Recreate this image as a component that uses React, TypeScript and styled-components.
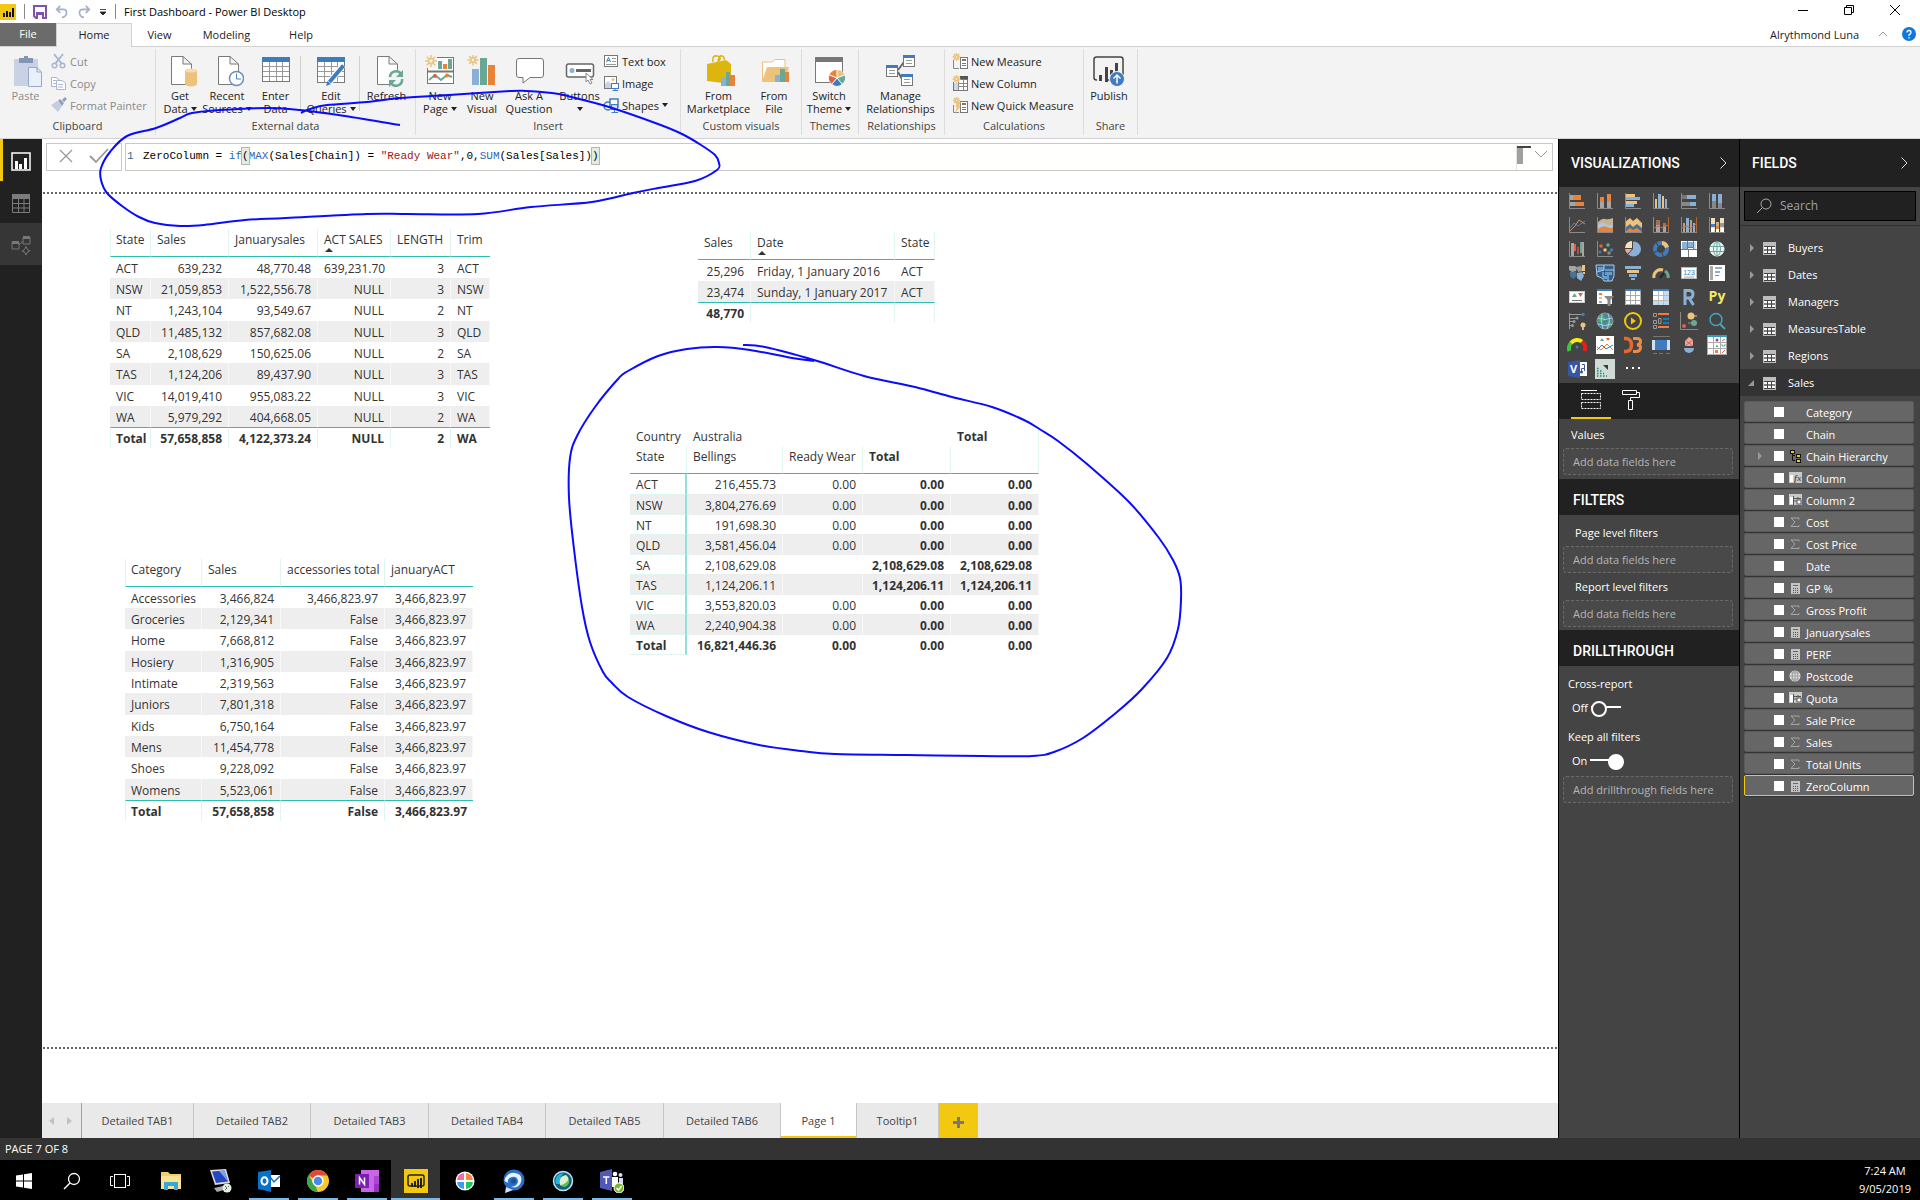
import React from "react";
import styled, { createGlobalStyle, css } from "styled-components";

const ui = `"Open Sans", "Noto Sans", sans-serif`;
const mono = `"Liberation Mono", monospace`;
const heading = `Roboto, "Open Sans", sans-serif`;

const Global = createGlobalStyle`
  * { box-sizing: border-box; }
  body { margin: 0; font: 11px/13px ${ui}; color: #333; background: #fff; }
  button { font: inherit; color: inherit; background: none; border: 0; padding: 0; margin: 0; }
  svg { display: block; flex: none; }
`;

const Shell = styled.div`
  position: relative;
  display: flex;
  flex-direction: column;
  min-height: 100vh;
  overflow: hidden;
`;

/* ---------- title bar ---------- */
const TitleBar = styled.header`
  display: flex;
  align-items: flex-start;
  height: 23px;
  color: #000;
`;
const QuickTools = styled.div`
  display: flex;
  align-items: center;
  height: 23px;
  gap: 8px;
`;
const QuickDivider = styled.span`
  width: 1px;
  height: 15px;
  background: #8a8a8a;
`;
const WindowTitle = styled.h1`
  margin: 0;
  font-size: 11px;
  line-height: 23px;
  font-weight: 400;
`;
const WindowButtons = styled.div`
  display: flex;
  margin-left: auto;
  padding-right: 2px;
  height: 20px;
`;
const WindowButton = styled.button`
  width: 46px;
  display: grid;
  place-items: center;
`;

/* ---------- menu ---------- */
const MenuBar = styled.nav`
  display: flex;
  height: 24px;
  border-bottom: 1px solid #d2d2d2;
  color: #222;
`;
const MenuTab = styled.button<{ $w: number; $kind?: "file" | "active" }>`
  width: ${(p) => p.$w}px;
  height: 24px;
  padding-bottom: 2px;
  ${(p) =>
    p.$kind === "file" &&
    css`
      height: 23px;
      background: #6b6b6b;
      color: #fff;
    `}
  ${(p) =>
    p.$kind === "active" &&
    css`
      background: #f3f3f3;
      border: 1px solid #d2d2d2;
      border-bottom: 0;
    `}
`;
const Account = styled.div`
  display: flex;
  align-items: center;
  gap: 19px;
  margin-left: auto;
  padding: 0 4px 1px 0;
`;
const AccountIcons = styled.div`
  display: flex;
  align-items: center;
  gap: 14px;
`;

/* ---------- ribbon ---------- */
const Ribbon = styled.section`
  display: flex;
  height: 92px;
  padding: 2px 0 3px;
  background: #f3f3f3;
  border-bottom: 1px solid #d2d2d2;
  color: #222;
`;
const Group = styled.div<{ $w: number }>`
  display: flex;
  flex-direction: column;
  width: ${(p) => p.$w}px;
  border-right: 1px solid #dcdcdc;
`;
const GroupTools = styled.div<{ $pad?: number }>`
  display: flex;
  height: 72px;
  padding-left: ${(p) => p.$pad ?? 1}px;
`;
const GroupLabel = styled.div`
  line-height: 18px;
  text-align: center;
  color: #444;
`;
const BigButton = styled.button<{ $w: number; $off?: boolean }>`
  display: flex;
  flex-direction: column;
  align-items: center;
  width: ${(p) => p.$w}px;
  padding-top: 6px;
  white-space: nowrap;
  color: ${(p) => (p.$off ? "#8a8a8a" : "#222")};
  svg {
    margin-bottom: 2px;
  }
`;
const LabelLine = styled.span`
  display: flex;
  align-items: center;
  justify-content: center;
  gap: 3px;
  min-height: 13px;
`;
const Caret = styled.i`
  border: 3px solid transparent;
  border-top: 4px solid #222;
  border-bottom: 0;
`;
const ToolDivider = styled.span`
  width: 1px;
  height: 55px;
  margin: 7px 2px 0 0;
  background: #d0d0d0;
`;
const SmallTools = styled.div<{ $off?: boolean }>`
  display: flex;
  flex-direction: column;
  padding-top: 1px;
  color: ${(p) => (p.$off ? "#8a8a8a" : "#222")};
`;
const SmallButton = styled.button`
  display: flex;
  align-items: center;
  gap: 3px;
  height: 22px;
  white-space: nowrap;
`;

/* ---------- workspace ---------- */
const Workspace = styled.div`
  display: flex;
  flex: 1;
`;
const SideNav = styled.nav`
  width: 42px;
  background: #212121;
`;
const NavButton = styled.button<{ $state?: "active" | "soft" }>`
  display: grid;
  place-items: center;
  width: 42px;
  height: 42px;
  padding: 3px 3px 0 0;
  border-left: 3px solid ${(p) => (p.$state === "active" ? "#f2c811" : "transparent")};
  background-color: ${(p) => (p.$state === "soft" ? "#363636" : "#212121")};
`;
const Main = styled.main`
  display: flex;
  flex-direction: column;
  flex: 1;
  min-width: 0;
  background: #fff;
`;
const FormulaRow = styled.div`
  display: flex;
  gap: 3px;
  padding: 4px 5px 0 4px;
`;
const FormulaActions = styled.div`
  display: flex;
  justify-content: center;
  gap: 16px;
  align-items: center;
  width: 76px;
  height: 28px;
  padding-bottom: 2px;
  border: 1px solid #c8c8c8;
`;
const FormulaBox = styled.div`
  display: flex;
  flex: 1;
  height: 28px;
  border: 1px solid #c8c8c8;
  background: #fffffe;
`;
const Code = styled.code`
  flex: 1;
  padding-left: 1px;
  font: 11px/24px ${mono};
  color: #000;
  white-space: pre;
`;
const LineNumber = styled.span`
  display: inline-block;
  width: 16px;
  color: #2b6b93;
`;
const Tok = styled.span<{ $c?: string }>`
  color: ${(p) => p.$c};
`;
const Bracket = styled.span`
  outline: 1px solid #b5b5b5;
  background: #e4ece0;
  padding: 2px 0;
`;
const MiniMap = styled.div`
  display: flex;
  gap: 4px;
  padding: 1px 5px 0 0;
  border-left: 1px solid #e4e4e4;
  margin-top: 1px;
`;
const Dots = styled.div`
  height: 2px;
  margin-left: 1px;
  background: repeating-linear-gradient(90deg, #666 0 2px, #fff 2px 4px);
`;
const Report = styled.section`
  display: flex;
  flex: 1;
  padding-left: 68px;
`;
const LeftColumn = styled.div`
  width: 520px;
  padding-top: 35px;
`;
const RightColumn = styled.div`
  padding-top: 38px;
`;
const Visual = styled.div<{ $top?: number; $left?: number }>`
  margin: ${(p) => p.$top ?? 0}px 0 0 ${(p) => p.$left ?? 0}px;
`;
const Gap = styled.div<{ $h: number }>`
  height: ${(p) => p.$h}px;
`;

const Grid = styled.table<{ $w: number }>`
  width: ${(p) => p.$w}px;
  table-layout: fixed;
  border-spacing: 0;
  font-size: 12px;
  line-height: 16px;
  color: #333;
  th, td {
    padding: 0 6px;
    font-weight: 400;
    text-align: left;
    white-space: nowrap;
    border-right: 1px solid #dff5f2;
  }
  tbody td { border-right-color: rgba(255, 255, 255, 0.6); }
  tbody tr > *, tfoot td { padding-top: 2px; }
  tbody tr:nth-child(even) > * { background: #eeeeee; }
`;
const PlainGrid = styled(Grid)<{ $edge?: boolean }>`
  thead th { height: 28px; padding-bottom: 6px; border-bottom: 1px solid #2bbfb1; }
  tbody tr { height: 21px; }
  tbody tr:nth-child(3n) { height: 22px; }
  tfoot td { height: 21px; font-weight: 700; border-top: 1px solid #2bbfb1; }
  ${(p) =>
    p.$edge &&
    css`
      thead th:first-child, tfoot td:first-child { border-left: 1px solid #dff5f2; padding-left: 5px; }
      thead th:last-child, tfoot td:last-child { border-right: 0; }
    `}
`;
const Cell = styled.td<{ $right?: boolean }>`
  && { text-align: ${(p) => (p.$right ? "right" : "left")}; }
`;
const HeadCell = styled.th`
  position: relative;
`;
const SortMark = styled.i`
  position: absolute;
  left: 7px;
  bottom: 4px;
  border: 4px solid transparent;
  border-bottom: 4px solid #333;
  border-top: 0;
`;
const Matrix = styled(Grid)`
  thead tr:first-child th { height: 20px; border-right: 0; }
  thead tr:first-child th:last-child { border-right: 1px solid #dff5f2; }
  thead tr:last-child th { height: 27px; padding-bottom: 6px; border-bottom: 1px solid #2bbfb1; }
  tbody tr { height: 20px; }
  tbody tr:first-child { height: 21px; }
  tbody tr > * { border-bottom: 1px solid #ececec; }
  tbody tr > th { border-right: 2px solid #8fe0d8; border-bottom-color: #dff5f2; }
  tbody tr:last-child > td { border-bottom: 0; }
  tbody tr:last-child > *, .sum { font-weight: 700; }
`;

/* ---------- page tabs, status ---------- */
const PageTabs = styled.nav`
  display: flex;
  height: 35px;
  margin-top: 54px;
  background: #e9e9e9;
  font-size: 11px;
  color: #444;
`;
const TabArrows = styled.div`
  display: flex;
  align-items: center;
  justify-content: space-around;
  width: 40px;
  padding-right: 2px;
  border-right: 1px solid #a0a0a0;
`;
const PageTab = styled.button<{ $w: number; $active?: boolean }>`
  width: ${(p) => p.$w}px;
  border-right: 1px solid #c6c6c6;
  ${(p) =>
    p.$active &&
    css`
      background: #fff;
      box-shadow: inset 0 -2px #f2c811;
    `}
`;
const AddPage = styled.button`
  display: grid;
  place-items: center;
  width: 39px;
  padding-top: 3px;
  background: #f2c811;
`;
const StatusBar = styled.footer`
  height: 22px;
  padding-left: 5px;
  background: #333;
  color: #fff;
  font-size: 11px;
  line-height: 22px;
`;

/* ---------- right panes ---------- */
const Pane = styled.aside`
  width: 181px;
  border-left: 1px solid #000;
  background: #444;
  color: #fff;
`;
const PaneHead = styled.header`
  display: flex;
  align-items: center;
  justify-content: space-between;
  height: 48px;
  padding: 0 11px 0 12px;
  background: #212121;
`;
const PaneTitle = styled.h2`
  margin: 0;
  font: 500 14px/20px ${heading};
`;
const IconGrid = styled.div`
  display: grid;
  grid-template-columns: repeat(6, 28px);
  grid-auto-rows: 24px;
  padding: 2px 4px;
`;
const IconButton = styled.button`
  display: grid;
  place-items: center;
`;
const FormatTabs = styled.div`
  display: flex;
  height: 36px;
  padding-left: 12px;
  background: #212121;
`;
const FormatTab = styled.button<{ $active?: boolean }>`
  display: grid;
  place-items: center;
  width: 40px;
  border-bottom: 2px solid ${(p) => (p.$active ? "#f2c811" : "transparent")};
`;
const SectionHead = styled.h3`
  margin: 0;
  height: 36px;
  padding: 5px 14px 0;
  background: #212121;
  font: 500 14px/32px ${heading};
`;
const PaneBody = styled.div<{ $tight?: boolean }>`
  display: flex;
  flex-direction: column;
  padding: ${(p) => (p.$tight ? "2px 6px 4px" : "4px 6px 3px")};
  font-size: 11px;
`;
const WellLabel = styled.div<{ $pad: number }>`
  padding-left: ${(p) => p.$pad}px;
  line-height: 27px;
`;
const Well = styled.div`
  height: 27px;
  margin: 0 0 0 -2px;
  padding-left: 9px;
  border: 1px dashed #6a6a6a;
  border-radius: 3px;
  background: #494949;
  color: #b5b5b5;
  line-height: 26px;
`;
const ToggleRow = styled.label`
  display: flex;
  align-items: center;
  gap: 3px;
  height: 20px;
  margin-bottom: 6px;
  padding-left: 7px;
`;
const Toggle = styled.input`
  appearance: none;
  width: 30px;
  height: 12px;
  margin: 0;
  background: linear-gradient(#fff, #fff) center / 100% 2px no-repeat;
  &::before {
    content: "";
    display: block;
    width: 12px;
    height: 12px;
    border: 2px solid #fff;
    border-radius: 50%;
    background: #444;
  }
  &:checked::before {
    margin-left: 18px;
    background: #fff;
  }
`;
const SearchBox = styled.label`
  display: flex;
  align-items: center;
  gap: 8px;
  height: 30px;
  margin: 4px;
  padding: 0 11px;
  border: 1px solid #000;
  background: #212121;
`;
const SearchInput = styled.input`
  flex: 1;
  min-width: 0;
  border: 0;
  padding: 0;
  background: none;
  font: 12px/20px ${ui};
  color: #fff;
  &::placeholder { color: #a0a0a0; opacity: 1; }
`;
const FieldTree = styled.div`
  padding-top: 8px;
  border-top: 1px solid #303030;
`;
const TableRow = styled.button<{ $open?: boolean }>`
  display: flex;
  align-items: center;
  width: 100%;
  height: 27px;
  padding-left: 8px;
  background: ${(p) => (p.$open ? "#333" : "none")};
  font-size: 11px;
  svg:nth-child(2) { margin: 2px 12px 0 7px; }
`;
const FieldList = styled.div`
  display: flex;
  flex-direction: column;
  gap: 1px;
  padding: 5px 6px 0 4px;
`;
const FieldRow = styled.label<{ $selected?: boolean }>`
  display: grid;
  grid-template-columns: 29px 10px 22px 1fr;
  align-items: center;
  height: 21px;
  border: 1px solid ${(p) => (p.$selected ? "#f2c811" : "#5a5a5a")};
  border-radius: 2px;
  background: #666;
  box-shadow: 0 1px #333;
  svg { justify-self: center; }
`;
const FieldName = styled.span`
  padding-top: 2px;
`;
const FieldCheck = styled.input`
  appearance: none;
  width: 10px;
  height: 10px;
  margin: 0;
  background: #fff;
  &:checked { background: #f2c811; }
`;

/* ---------- taskbar ---------- */
const TaskBar = styled.footer`
  display: flex;
  height: 40px;
  background: #000;
  color: #fff;
`;
const TaskButton = styled.button<{ $w?: number; $state?: "open" | "active" }>`
  display: grid;
  place-items: center;
  width: ${(p) => p.$w ?? 49}px;
  padding-top: 1px;
  ${(p) => p.$state === "open" && "background: linear-gradient(#76b9ed, #76b9ed) bottom / 40px 2px no-repeat;"}
  ${(p) => p.$state === "active" && "background: linear-gradient(#76b9ed, #76b9ed) bottom / 100% 2px no-repeat #333;"}
`;
const Clock = styled.time`
  margin-left: auto;
  padding: 2px 9px 0 0;
  line-height: 18px;
  text-align: center;
  white-space: pre;
`;
const InkLayer = styled.svg`
  position: absolute;
  top: 0;
  left: 0;
  pointer-events: none;
`;

/* ---------- drawing helpers ---------- */
const R = (p: { x: number; y: number; w: number; h: number; f: string }) => (
  <rect x={p.x} y={p.y} width={p.w} height={p.h} fill={p.f} />
);
const L = (p: { d: string; c?: string; w?: number; f?: string }) => (
  <path d={p.d} stroke={p.c ?? "#8a8a8a"} strokeWidth={p.w ?? 1} fill={p.f ?? "none"} />
);
const Axis = () => <L d="M2.5 2V17.5H18" />;
const Svg = ({ s = 20, h, size, children }: { s?: number; h?: number; size?: number; children: React.ReactNode }) => (
  <svg width={size ?? s} height={size ?? h ?? s} viewBox={`0 0 ${s} ${h ?? s}`} fill="none" aria-hidden="true">
    {children}
  </svg>
);

const O = "#e8833a", G = "#a6a6a6", Y = "#edc27c", B = "#8ab0d6", D = "#3e7cbf", T = "#68a894", P = "#f0a89c", RD = "#d9634c";

const vizIcons: [string, React.ReactNode][] = [
  ["Stacked bar chart", <><Axis /><R x={3} y={4} w={3} h={5} f={G} /><R x={6} y={4} w={8} h={5} f={O} /><R x={3} y={11} w={5} h={4} f={G} /><R x={8} y={11} w={9} h={4} f={O} /></>],
  ["Stacked column chart", <><Axis /><R x={5} y={6} w={4} h={5} f={O} /><R x={5} y={11} w={4} h={6} f={G} /><R x={12} y={3} w={4} h={8} f={O} /><R x={12} y={11} w={4} h={6} f={G} /></>],
  ["Clustered bar chart", <><Axis /><R x={3} y={3} w={9} h={3} f={Y} /><R x={3} y={6} w={14} h={3} f={B} /><R x={3} y={10} w={11} h={3} f={Y} /><R x={3} y={13} w={8} h={3} f={B} /></>],
  ["Clustered column chart", <><Axis /><R x={4} y={8} w={2} h={9} f={Y} /><R x={7} y={3} w={3} h={14} f={B} /><R x={11} y={5} w={2} h={12} f={Y} /><R x={14} y={8} w={2} h={9} f={B} /></>],
  ["100% stacked bar chart", <><Axis /><R x={3} y={4} w={5} h={4} f="#777" /><R x={8} y={4} w={9} h={4} f={B} /><R x={3} y={11} w={8} h={4} f="#888" /><R x={11} y={11} w={6} h={4} f={B} /></>],
  ["100% stacked column chart", <><Axis /><R x={5} y={3} w={4} h={7} f={B} /><R x={5} y={10} w={4} h={7} f="#888" /><R x={11} y={3} w={4} h={9} f={B} /><R x={11} y={12} w={4} h={5} f="#888" /></>],
  ["Line chart", <><Axis /><L d="M3 13L7 8L11 11L18 6" c="#4f81b8" /><L d="M3 16L8 11L12 5L18 9" c="#c98f80" /></>],
  ["Area chart", <><Axis /><path d="M3 7Q7 3 10 4T18 3V17H3Z" fill="#c5b394" /><path d="M3 10Q7 6 11 9T18 9V17H3Z" fill="#a9c9e6" /><path d="M3 14Q8 10 12 12T18 12V17H3Z" fill={O} /></>],
  ["Stacked area chart", <><path d="M2 17V7L7 3L10 6L14 3L19 8V17Z" fill={Y} /><path d="M2 13L7 9L10 12L14 9L19 13V17H2Z" fill="#4a7193" /><path d="M2 17L7 13L10 15L14 13L19 17V18H2Z" fill={O} /><Axis /></>],
  ["Line and stacked column chart", <><Axis /><R x={5} y={5} w={4} h={5} f="#a07155" /><R x={5} y={10} w={4} h={7} f={G} /><R x={12} y={8} w={3} h={3} f="#a07155" /><R x={12} y={11} w={3} h={6} f={G} /><L d="M17.5 2V17" c="#b5652c" /><L d="M3 13L8 11L11 13L17 10" c={RD} /></>],
  ["Line and clustered column chart", <><Axis /><R x={4} y={8} w={2} h={9} f="#b8a37c" /><R x={7} y={3} w={3} h={14} f={B} /><R x={11} y={5} w={2} h={12} f="#b8a37c" /><R x={14} y={8} w={2} h={9} f={B} /><L d="M17.5 2V17" c="#b5652c" /><L d="M3 13L8 11L11 14L17 9" c={RD} /></>],
  ["Ribbon chart", <><Axis /><R x={4} y={3} w={4} h={14} f="#f3dfc0" /><R x={9} y={7} w={3} h={7} f="#c8b090" /><R x={13} y={3} w={4} h={14} f="#f3dfc0" /><R x={4} y={9} w={4} h={3} f="#4f81b8" /><R x={9} y={11} w={3} h={4} f={O} /><R x={13} y={8} w={4} h={4} f="#999" /><R x={4} y={13} w={3} h={4} f="#fff" /><R x={9} y={14} w={3} h={3} f="#fff" /><R x={14} y={13} w={3} h={4} f="#fff" /></>],
  ["Waterfall chart", <><Axis /><R x={4} y={4} w={3} h={13} f={G} /><R x={7} y={5} w={2} h={7} f={RD} /><R x={10} y={8} w={2} h={7} f="#c04c3c" /><R x={13} y={3} w={2} h={11} f={T} /><R x={15} y={3} w={2} h={14} f={G} /></>],
  ["Scatter chart", <><Axis /><circle cx="6" cy="7" r="1.800" fill={RD} /><circle cx="13" cy="6" r="1.800" fill={T} /><circle cx="10" cy="11" r="1.800" fill={Y} /><circle cx="5" cy="13" r="1.500" fill={D} /><circle cx="16.500" cy="11" r="1.800" fill={D} /><circle cx="14" cy="14" r="1.800" fill="#888" /></>],
  ["Pie chart", <><circle cx="10.500" cy="10" r="7.500" fill={B} /><path d="M9 9V2A7 7 0 0 0 2 9Z" fill="#f7e1bd" /><path d="M9 10H2A7 7 0 0 0 5 15Z" fill={P} /><L d="M9.500 1V10L4 16M9 9.500H2" c="#444" /></>],
  ["Donut chart", <><circle cx="10" cy="10" r="6" stroke={D} strokeWidth="4" strokeDasharray="7 1" /><path d="M11 2A8 8 0 0 1 18 8L14 9A4 4 0 0 0 11 6Z" fill={Y} /></>],
  ["Treemap", <><R x={2} y={2} w={16} h={16} f="#fff" /><R x={3} y={3} w={5} h={7} f={B} /><R x={9} y={3} w={5} h={5} f={B} /><R x={15} y={3} w={2} h={7} f="#c9dbed" /><L d="M8.500 2V10M2 10.500H18M9.500 11V18M14.500 2V10M9 8.500H14" c="#777" /></>],
  ["Map", <><circle cx="10" cy="10" r="7" fill="#e9f4f4" stroke="#fff" /><L d="M3 7.500H17M3 12.500H17M10 3V17" c="#68a8a0" /><ellipse cx="10" cy="10" rx="3.500" ry="7" stroke="#68a8a0" /></>],
  ["Filled map", <><path d="M2 3H8L10 5L9 8L5 9L2 7Z" fill={G} /><path d="M9 4L14 3L16 8L11 9Z" fill="#999" /><path d="M3 9L9 9L10 13L6 16L3 13Z" fill="#4a7193" /><path d="M10 10L15 9L17 13L14 18L10 15Z" fill={B} /><R x={15} y={2} w={3} h={6} f={Y} /><R x={16} y={9} w={2} h={2} f={Y} /></>],
  ["Shape map", <><path d="M1 2H19V13L17 18H9L7 15L2 13Z" fill="#335f8c" stroke="#a9cbe8" /><path d="M3 4H9V8H3ZM10 9H17V12H10ZM8 13H12V16H8Z" fill="#6a9cc9" /><L d="M9 2V7L2 9M10 7H19M8 9V14M13 12V18" c="#a9cbe8" /></>],
  ["Funnel", <><R x={2} y={3} w={16} h={3} f={B} /><R x={4} y={7} w={12} h={3} f={Y} /><R x={6} y={11} w={8} h={3} f={B} /><R x={8} y={15} w={4} h={2} f={B} /></>],
  ["Gauge", <><path d="M3 15A7 7 0 0 1 12 7" stroke={Y} strokeWidth="3" /><path d="M14 8A7 7 0 0 1 17 15" stroke={T} strokeWidth="3" /><L d="M9 15L13 10" c="#222" w={2} /></>],
  ["Card", <><rect x="2.500" y="4.500" width="15" height="11" fill="#fff" stroke="#bbb" /><text x="10" y="12" fontSize="7" fill={D} textAnchor="middle" fontFamily="Liberation Sans">123</text><L d="M5 14H15" c="#aaa" /></>],
  ["Multi-row card", <><R x={2} y={2} w={16} h={16} f="#fff" /><R x={3} y={3} w={3} h={14} f="#aaa" /><R x={8} y={4} w={7} h={2} f={B} /><R x={8} y={8} w={5} h={2} f={B} /><R x={8} y={12} w={4} h={1} f="#888" /></>],
  ["KPI", <><rect x="2.500" y="4.500" width="15" height="11" fill="#fff" stroke="#ccc" /><path d="M5 10L7.500 6L10 10Z" fill={T} /><path d="M11 6H16L13.500 10Z" fill={RD} /><L d="M5 13.500H15" c="#777" /></>],
  ["Slicer", <><R x={2} y={2} w={15} h={15} f="#fff" /><R x={2} y={2} w={15} h={2} f={D} /><R x={4} y={6} w={3} h={2} f={O} /><R x={4} y={10} w={3} h={2} f={Y} /><R x={4} y={14} w={3} h={2} f={B} /><path d="M9 9H19L15.500 13V19H12.500V13Z" fill="#888" /></>],
  ["Table", <><R x={2} y={2} w={16} h={16} f="#fff" /><R x={2} y={2} w={16} h={2} f={D} /><L d="M7.500 4V18M12.500 4V18M2 8.500H18M2 13.500H18M2.500 4V17.500H17.500V4" c="#aaa" /></>],
  ["Matrix", <><R x={2} y={2} w={16} h={16} f="#fff" /><R x={2} y={2} w={16} h={2} f={D} /><R x={13} y={4} w={5} h={14} f="#c5dcf0" /><R x={2} y={14} w={16} h={4} f="#c5dcf0" /><L d="M7.500 4V18M12.500 4V18M2 8.500H18M2 13.500H18" c="#bbb" /></>],
  ["R script visual", <L d="M6 18V3.500H10Q14 3.500 14 7Q14 11 10 11H6M10 11L14.500 18" c={B} w={3} />],
  ["Python visual", <text x="10" y="14" fontSize="14" fontWeight="700" fill="#f5e960" textAnchor="middle" fontFamily="Open Sans">Py</text>],
  ["Key influencers", <><L d="M2.500 2V18M3 3.500H15M3 7.500H10M3 10.500H7M3 14.500H6" c="#999" /><circle cx="16" cy="3.500" r="1.800" fill={D} /><circle cx="10" cy="7" r="1.500" fill="#999" /><circle cx="7" cy="10.500" r="1.500" fill="#999" /><circle cx="5.500" cy="14.500" r="1.500" fill="#999" /><circle cx="16" cy="14" r="2.500" fill={Y} /><R x={15} y={16} w={2} h={3} f="#bbb" /></>],
  ["ArcGIS map", <><circle cx="10" cy="10" r="8" fill="#557f9b" stroke="#999" /><path d="M4 5L9 4L11 8L7 12L3 10ZM12 11L16 9L15 15L11 16Z" fill="#44b06c" /><L d="M3 7Q10 10 17 7M3 13Q10 16 17 13M7 3Q5 10 8 18M13 3Q16 10 12 18" c="#9fd3e6" /></>],
  ["Play axis", <><circle cx="10" cy="10" r="8" stroke="#f2c811" strokeWidth="2" /><path d="M8 6.500L13 10L8 13.500Z" fill="#f2c811" /></>],
  ["Text filter", <><L d="M2.500 2.500H5.500V5.500H2.500ZM2.500 9.500H5.500V12.500H2.500ZM2.500 14.500H5.500V17.500H2.500ZM7.500 7.500H10V12.500H7.500Z" c="#999" /><R x={7} y={2} w={11} h={2} f="#f47b3c" /><R x={12} y={7} w={6} h={2} f="#0a7cc9" /><R x={12} y={11} w={6} h={2} f="#0a7cc9" /><R x={7} y={15} w={11} h={2} f="#f47b3c" /></>],
  ["Dot plot", <><L d="M1.500 1V18.500H19" /><circle cx="12" cy="5" r="3.500" fill={Y} /><L d="M9 5H18" c={Y} /><circle cx="15" cy="12" r="3" fill={T} /><L d="M9 12H15" c={T} /><circle cx="5" cy="15" r="2" fill={RD} /></>],
  ["Search visual", <><circle cx="9" cy="8.500" r="6" stroke="#3fa7bf" strokeWidth="1.500" /><L d="M13 13L18 18" c="#3fa7bf" w={2} /></>],
  ["Dial gauge", <><path d="M2.500 16A8 8 0 0 1 4 8" stroke="#3ec73a" strokeWidth="4" /><path d="M4 8A8 8 0 0 1 15 6.500" stroke="#f7ef10" strokeWidth="4" /><path d="M15 6.500A8 8 0 0 1 17.500 16" stroke="#e62018" strokeWidth="4" /><circle cx="10" cy="12" r="1.500" fill={D} /></>],
  ["Sparkline", <><R x={1} y={1} w={18} h={18} f="#fff" /><path d="M5 6L7 3L9 6Z" fill={T} /><path d="M11 3H15L13 6Z" fill={RD} /><L d="M2 15L7 10L11 14L18 10" c={D} /><L d="M2 12L6 15L12 9L18 15" c={O} /></>],
  ["D3 visual", <><path d="M1 3.500H3Q8.500 4 8.500 10T3 16.500H1" stroke="#e8682c" strokeWidth="3.500" /><path d="M10 3.500H14Q17.500 3.500 17.500 6.500T14 10Q18 10 17.500 13T14 16.500H10" stroke="#f08a4b" strokeWidth="3" /></>],
  ["Scroller", <><R x={1} y={5} w={18} h={10} f="#cfe0ef" /><R x={4} y={5} w={12} h={10} f={D} /><L d="M2 1.500H19M2 18.500H6M8 18.500H12M15 18.500H19" c="#777" /></>],
  ["Person chart", <><path d="M6 6L10 2L14 5V11H6Z" fill={P} /><L d="M6 5L14 11M14 5L6 11" c={RD} /><path d="M5 13A5 5 0 0 0 15 13Z" fill={B} /></>],
  ["Icon grid", <><R x={0} y={0} w={20} h={20} f="#fff" /><R x={0} y={0} w={20} h={2} f="#2f9dbb" /><L d="M6.500 2V19M13.500 2V19M0 7.500H20M0 13.500H20M0.500 2V19.500H19.500V2" c="#aaa" /><circle cx="10" cy="5" r="1.500" fill="#8b4a9c" /><L d="M15 6L18 4M15 18L18 15" c={RD} /><path d="M8.500 12L10 9.500L11.500 12Z" fill={T} /><L d="M15 9V11H18V9" c={T} /><R x={8} y={15} w={3} h={3} f={O} /></>],
  ["Visio visual", <><R x={12} y={3} w={8} h={14} f="#fff" /><path d="M1 3L13 1V19L1 17Z" fill="#3955a3" /><text x="6.500" y="14" fontSize="11" fontWeight="700" fill="#fff" textAnchor="middle" fontFamily="Open Sans">V</text><L d="M14.500 12V9.500H17.500V5.500H15M17.500 9V12" c="#3955a3" /><circle cx="14.500" cy="13" r="1.500" fill="#3955a3" /></>],
  ["Dot density", <><R x={0} y={0} w={20} h={20} f="#d0dcd3" /><path d="M8 6H13V11Z" fill="#2b3d4f" /><path d="M2 9.500H4M2 12H7M2 14.500H9M2 17H12" stroke="#168a8a" strokeWidth="1.500" strokeDasharray="1.500 1.500" /></>],
  ["More visuals", <><R x={3} y={8} w={2} h={2} f="#fff" /><R x={9} y={8} w={2} h={2} f="#fff" /><R x={15} y={8} w={2} h={2} f="#fff" /></>],
];

const Sun = ({ x = 6, y = 6, r = 6 }) => (
  <g stroke={Y} strokeWidth="1.5">
    <path d={`M${x} ${y - r}V${y + r}M${x - r} ${y}H${x + r}M${x - r * 0.7} ${y - r * 0.7}L${x + r * 0.7} ${y + r * 0.7}M${x + r * 0.7} ${y - r * 0.7}L${x - r * 0.7} ${y + r * 0.7}`} />
    <circle cx={x} cy={y} r={r * 0.4} fill="#f3f3f3" />
  </g>
);
const Sheet = () => <L d="M6.500 1.500H18L26.500 9V29.500H6.500ZM18 1.500V9H26.500" c="#7a7a7a" f="#fff" />;

const big = {
  paste: <Svg s={32}><R x={4} y={4} w={24} h={27} f="#c8d2e4" /><R x={9} y={3} w={14} h={5} f="#8494b3" /><R x={14} y={1} w={4} h={4} f="#8494b3" /><path d="M18.500 12.500H27L31.500 17V31.500H18.500ZM27 12.500V17H31.500" fill="#e9f0fb" stroke="#96a9cc" /></Svg>,
  getData: <Svg s={34} h={32}><g transform="translate(2)"><Sheet /><path d="M20 15V29A6 2.500 0 0 0 32 29V15Z" fill={Y} /><ellipse cx="26" cy="15.500" rx="6" ry="2" fill="#f7dcae" /></g></Svg>,
  recent: <Svg s={34} h={32}><g transform="translate(2)"><Sheet /><circle cx="24.500" cy="23.500" r="7" fill="#fff" stroke="#6a8fbd" strokeWidth="1.500" /><L d="M24.500 18.500V24H29" c="#4f81b8" w={1} /></g></Svg>,
  enter: <Svg s={32}><rect x="2.500" y="2.500" width="27" height="24" fill="#fff" stroke="#7a7a7a" /><R x={2} y={2} w={28} h={5} f={D} /><L d="M9.500 7V26M16.500 7V26M22.500 7V26M3 11.500H29M3 16.500H29M3 21.500H29" c="#999" /></Svg>,
  edit: <Svg s={32}><rect x="2.500" y="2.500" width="27" height="25" fill="#fff" stroke="#7a7a7a" /><R x={2} y={2} w={28} h={5} f={D} /><L d="M9.500 7V27M16.500 7V27M22.500 7V27M3 11.500H29M3 16.500H29M3 21.500H29" c="#999" /><L d="M28 10L14 28" c="#fff" w={6} /><L d="M28.500 10.500L14.500 27" c={D} w={4} /><path d="M11 31L12.500 26L16 29Z" fill={D} /></Svg>,
  refresh: <Svg s={34} h={32}><g transform="translate(1)"><Sheet /><circle cx="25" cy="23" r="8" fill="#f3f3f3" /><L d="M19 22A6 6 0 0 1 30 19M31 24A6 6 0 0 1 20 28" c={T} w={2.5} /><path d="M32 15V22H25ZM18 32V25H25Z" fill={T} /></g></Svg>,
  newPage: <Svg s={32}><rect x="3.500" y="2.500" width="26" height="26" fill="#fff" stroke="#777" /><L d="M3 16.500H30" c="#777" w={2} /><R x={14} y={6} w={4} h={8} f={T} /><R x={19} y={9} w={4} h={5} f={O} /><R x={24} y={4} w={4} h={10} f={T} /><L d="M5 25L11 20L17 25L23 20L28 22" c={T} w={2} /><circle cx="11" cy="21" r="2" fill={RD} /><circle cx="23" cy="20.500" r="2" fill={O} /><R x={0} y={0} w={13} h={13} f="#f3f3f3" /><Sun x={7} /></Svg>,
  newVisual: <Svg s={32}><R x={6} y={14} w={7} h={16} f={B} /><R x={14} y={3} w={7} h={27} f={T} /><R x={22} y={10} w={7} h={20} f={O} /><Sun x={7} y={5} r={5.500} /></Svg>,
  ask: <Svg s={32}><L d="M6 3.500H28Q30.500 3.500 30.500 6V20Q30.500 22.500 28 22.500H17L10 28V22.500H6Q3.500 22.500 3.500 20V6Q3.500 3.500 6 3.500Z" c="#777" f="#fff" /></Svg>,
  buttons: <Svg s={32}><rect x="2.500" y="9" width="27" height="13" rx="2" fill="#fff" stroke="#666" strokeWidth="1.500" /><circle cx="8" cy="15.500" r="2.500" fill={B} /><R x={12} y={14} w={15} h={3} f="#666" /><path d="M22 18V27L24 25L26 29L28 28L26 24.500H29Z" fill="#fff" stroke="#888" /></Svg>,
  market: <Svg s={34} h={32}><g transform="translate(2)"><path d="M3 9L22 5L27 9V29L3 26Z" fill="#ddb50f" /><L d="M9 7Q8 0 13 1T15 6M14 7Q15 0 18 1T20 5" c="#ddb50f" w={1.5} /><R x={17} y={22} w={5} h={9} f={B} /><R x={22} y={17} w={4} h={14} f={T} /><R x={26} y={20} w={5} h={11} f={O} /></g></Svg>,
  file: <Svg s={34} h={32}><g transform="translate(2)"><L d="M3.500 26V7H13L16 4.500H26V12" c={Y} f="#fff" /><path d="M3 27L8 12H30L26 27Z" fill={Y} /><R x={16} y={20} w={5} h={7} f={B} /><R x={21} y={14} w={5} h={13} f={T} /><R x={26} y={17} w={4} h={10} f={O} /></g></Svg>,
  theme: <Svg s={32}><rect x="2.500" y="2.500" width="27" height="25" fill="#fff" stroke="#777" /><R x={2} y={2} w={28} h={5} f="#777" /><circle cx="24" cy="23" r="8.500" fill="#f3f3f3" /><path d="M24 23V15A8 8 0 0 1 31.500 20Z" fill={Y} /><path d="M24 23L31.500 20A8 8 0 0 1 29 29Z" fill={T} /><path d="M24 23L29 29A8 8 0 0 1 19 29Z" fill={D} /><path d="M24 23L19 29A8 8 0 0 1 16.500 20Z" fill={RD} /><path d="M24 23L16.500 20A8 8 0 0 1 24 15Z" fill={O} /><L d="M24 23V15M24 23L31.500 20M24 23L29 29M24 23L19 29M24 23L16.500 20" c="#fff" /></Svg>,
  relations: <Svg s={32}><L d="M13 15L19 7M13 17L17 24" c="#666" w={2} />{[[1, 10], [18, 0], [16, 19]].map(([x, y]) => <g key={x}><rect x={x + 0.500} y={y + 0.500} width="11" height="11" fill="#fff" stroke="#777" /><R x={x} y={y} w={12} h={3} f={D} /><L d={`M${x + 3} ${y + 5.500}H${x + 9}M${x + 3} ${y + 8.500}H${x + 9}`} c="#999" /></g>)}</Svg>,
  publish: <Svg s={32}><rect x="1" y="2" width="29" height="23" rx="2.500" stroke="#444" strokeWidth="1.500" /><R x={4} y={18} w={8} h={9} f="#f3f3f3" /><R x={6} y={20} w={3} h={6} f="#444" /><R x={12} y={12} w={3} h={15} f="#444" /><R x={17} y={15} w={3} h={10} f="#444" /><R x={22} y={8} w={3} h={12} f="#444" /><circle cx="24" cy="24" r="7.500" fill={D} stroke="#f3f3f3" /><L d="M24 28.500V20M20.500 23.500L24 20L27.500 23.500" c="#fff" w={1.5} /></Svg>,
};

const sm = {
  cut: <Svg s={16}><L d="M3 1L11 11M12 1L4 11" c="#a9b6cf" w={2} /><circle cx="3.500" cy="12.500" r="2.300" stroke="#a9b6cf" strokeWidth="1.500" /><circle cx="11.500" cy="12.500" r="2.300" stroke="#a9b6cf" strokeWidth="1.500" /></Svg>,
  copy: <Svg s={16}><L d="M0.500 2.500H5L8.500 5V11.500H0.500Z" c="#a9b6cf" f="#fff" /><L d="M5.500 5.500H11L14.500 8V14.500H5.500Z" c="#a9b6cf" f="#fff" /><L d="M7 9.500H12M7 12H12M2 5.500H5M2 8.500H5" c="#a9b6cf" /></Svg>,
  painter: <Svg s={16}><path d="M0 8L6 4L11 9L7 15Z" fill="#c2cde0" /><path d="M7 4L9 2L13 6L11 9Z" fill="#8f9fbd" /><L d="M12 4L15 1" c="#8f9fbd" w={3} /></Svg>,
  text: <Svg s={16}><rect x="1.500" y="2.500" width="13" height="11" fill="#fff" stroke="#777" /><L d="M3.500 9L5.500 4.500L7.500 9M4 7.500H7" c={D} /><L d="M9 5.500H13M9 8.500H13M3 11.500H13" c="#999" /></Svg>,
  image: <Svg s={16}><rect x="1.500" y="1.500" width="12" height="12" fill="#fff" stroke="#777" /><circle cx="10" cy="4.500" r="1.500" fill={Y} /><path d="M2 13V9L5 6L8 9V13Z" fill="#c5d3e6" /><rect x="8.500" y="8.500" width="7" height="5" fill="#fff" stroke={D} /><L d="M12 14V15.500M9.500 15.500H15" c={D} /></Svg>,
  shapes: <Svg s={16}><circle cx="5" cy="9" r="4" stroke={D} strokeWidth="1.500" /><rect x="7" y="2" width="8" height="8" fill="#fff" stroke={D} strokeWidth="1.500" /><rect x="8.500" y="7.500" width="6" height="5" fill="#c5dcf0" stroke={D} /><L d="M11.500 13V15.500M8.500 15.500H15" c={D} /></Svg>,
  measure: <Svg s={16}><L d="M1.500 7V15.500H7" c="#888" /><rect x="8.500" y="4.500" width="7" height="11" fill="#fff" stroke="#777" /><R x={10} y={6} w={4} h={2} f="#777" /><L d="M10 10.500H14M10 12.500H14" c="#777" /><Sun x={4.500} y={4} r={4} /></Svg>,
  column: <Svg s={16}><rect x="1.500" y="4.500" width="14" height="11" fill="#fff" stroke="#777" /><R x={8} y={1} w={8} h={3} f="#555" /><R x={2} y={8} w={4} h={7} f="#c5dcf0" /><L d="M6.500 4V15M11.500 4V15M6 8.500H15M6 11.500H15" c="#888" /><R x={0} y={0} w={8} h={7} f="#f3f3f3" /><Sun x={4.500} y={4} r={4} /></Svg>,
  quick: <Svg s={16}><L d="M1.500 8V15.500H7" c="#888" /><rect x="8.500" y="4.500" width="7" height="11" fill="#fff" stroke="#777" /><R x={10} y={6} w={4} h={2} f="#777" /><L d="M10 10.500H14M10 12.500H14" c="#777" /><path d="M6 5L9 5L7 9H9L3 16L5 10H3Z" fill={Y} /><Sun x={4.500} y={3.500} r={3.500} /></Svg>,
};

const TableGlyph = () => (
  <Svg s={13} h={13}><R x={0} y={0} w={13} h={13} f="#bdbdbd" /><L d="M1 4.500H12M1 8H12M1 11.500H12M4.500 4V12M8.500 4V12" c="#444" w={1} /><R x={1} y={5} w={3} h={2} f="#fff" /><R x={5} y={5} w={3} h={2} f="#fff" /><R x={9} y={5} w={3} h={2} f="#fff" /><R x={1} y={9} w={3} h={2} f="#fff" /><R x={5} y={9} w={3} h={2} f="#fff" /><R x={9} y={9} w={3} h={2} f="#fff" /></Svg>
);
const fieldIcons: Record<string, React.ReactNode> = {
  none: <span />,
  sum: <Svg s={12}><path d="M10 3.500V2H2L6 6L2 10.500H10V9" stroke="#a5a5a5" /></Svg>,
  calc: <Svg s={12}><R x={2} y={1} w={9} h={11} f="#c4c4c4" /><L d="M4 3.500H9" c="#666" /><path d="M4 6.500H10M4 8.500H10M4 10.500H10" stroke="#555" strokeDasharray="1 1" /></Svg>,
  hier: <Svg s={12} h={14}><L d="M3.500 4V11.500H6M3.500 6.500H6" c="#111" /><rect x="1.500" y="1.500" width="4" height="3" fill="#f2c811" stroke="#111" /><rect x="7.500" y="5.500" width="4" height="3" fill="#f2c811" stroke="#111" /><rect x="7.500" y="10.500" width="4" height="3" fill="#f2c811" stroke="#111" /></Svg>,
  fx: <Svg s={13}><R x={0} y={1} w={13} h={11} f="#c9c9c9" /><R x={1} y={4} w={3} h={7} f="#fff" /><text x="5" y="10" fontSize="9" fontStyle="italic" fontWeight="700" fill="#555" fontFamily="Liberation Serif">fx</text></Svg>,
  col: <Svg s={13}><R x={0} y={1} w={13} h={11} f="#c9c9c9" /><R x={1} y={4} w={3} h={7} f="#fff" /><L d="M4.500 3V12M9 4V6M5 5.500H12M5 8H8" c="#555" /><rect x="8" y="7" width="4" height="4" fill="#fff" stroke="#555" /></Svg>,
  globe: <Svg s={12}><circle cx="6" cy="6" r="5.500" fill="#dedede" /><L d="M6 0V12M0.500 6H11.500M2 3H10M2 9H10" c="#8a8a8a" w={0.700} /><ellipse cx="6" cy="6" rx="2.800" ry="5.500" stroke="#8a8a8a" strokeWidth="0.700" /></Svg>,
};

/* ---------- data ---------- */
type Col = { label: string; w: number; right?: boolean; sort?: boolean };
const stateCols: Col[] = [
  { label: "State", w: 41 },
  { label: "Sales", w: 78, right: true },
  { label: "Januarysales", w: 89, right: true },
  { label: "ACT SALES", w: 73, right: true, sort: true },
  { label: "LENGTH", w: 60, right: true },
  { label: "Trim", w: 39 },
];
const stateRows = `ACT|639,232|48,770.48|639,231.70|3|ACT
NSW|21,059,853|1,522,556.78|NULL|3|NSW
NT|1,243,104|93,549.67|NULL|2|NT
QLD|11,485,132|857,682.08|NULL|3|QLD
SA|2,108,629|150,625.06|NULL|2|SA
TAS|1,124,206|89,437.90|NULL|3|TAS
VIC|14,019,410|955,083.22|NULL|3|VIC
WA|5,979,292|404,668.05|NULL|2|WA`.split("\n").map((r) => r.split("|"));
const dateCols: Col[] = [
  { label: "Sales", w: 53, right: true },
  { label: "Date", w: 144, sort: true },
  { label: "State", w: 40 },
];
const dateRows = [["25,296", "Friday, 1 January 2016", "ACT"], ["23,474", "Sunday, 1 January 2017", "ACT"]];
const catCols: Col[] = [
  { label: "Category", w: 77 },
  { label: "Sales", w: 79, right: true },
  { label: "accessories total", w: 104, right: true },
  { label: "januaryACT", w: 88, right: true },
];
const catRows = `Accessories|3,466,824|3,466,823.97
Groceries|2,129,341|False
Home|7,668,812|False
Hosiery|1,316,905|False
Intimate|2,319,563|False
Juniors|7,801,318|False
Kids|6,750,164|False
Mens|11,454,778|False
Shoes|9,228,092|False
Womens|5,523,061|False`.split("\n").map((r) => [...r.split("|"), "3,466,823.97"]);
const matrixRows = `ACT|216,455.73|0.00|0.00|0.00
NSW|3,804,276.69|0.00|0.00|0.00
NT|191,698.30|0.00|0.00|0.00
QLD|3,581,456.04|0.00|0.00|0.00
SA|2,108,629.08||2,108,629.08|2,108,629.08
TAS|1,124,206.11||1,124,206.11|1,124,206.11
VIC|3,553,820.03|0.00|0.00|0.00
WA|2,240,904.38|0.00|0.00|0.00
Total|16,821,446.36|0.00|0.00|0.00`.split("\n").map((r) => r.split("|"));

const fields: [string, string][] = [
  ["Category", "none"], ["Chain", "none"], ["Chain Hierarchy", "hier"], ["Column", "fx"], ["Column 2", "col"],
  ["Cost", "sum"], ["Cost Price", "sum"], ["Date", "none"], ["GP %", "calc"], ["Gross Profit", "sum"],
  ["Januarysales", "calc"], ["PERF", "calc"], ["Postcode", "globe"], ["Quota", "col"], ["Sale Price", "sum"],
  ["Sales", "sum"], ["Total Units", "sum"], ["ZeroColumn", "calc"],
];

const pageTabs: [string, number][] = [
  ["Detailed TAB1", 112], ["Detailed TAB2", 117], ["Detailed TAB3", 118], ["Detailed TAB4", 117],
  ["Detailed TAB5", 118], ["Detailed TAB6", 117], ["Page 1", 76], ["Tooltip1", 82],
];

const DataTable = ({ cols, rows, total, edge }: { cols: Col[]; rows: string[][]; total: string[]; edge?: boolean }) => (
  <PlainGrid $w={cols.reduce((a, c) => a + c.w, 0)} $edge={edge}>
    <colgroup>{cols.map((c) => <col key={c.label} style={{ width: c.w }} />)}</colgroup>
    <thead>
      <tr>{cols.map((c) => <HeadCell key={c.label} scope="col">{c.label}{c.sort && <SortMark />}</HeadCell>)}</tr>
    </thead>
    <tbody>
      {rows.map((r) => <tr key={r[0]}>{r.map((v, i) => <Cell key={i} $right={cols[i].right}>{v}</Cell>)}</tr>)}
    </tbody>
    <tfoot>
      <tr>{total.map((v, i) => <Cell key={i} $right={cols[i].right}>{v}</Cell>)}</tr>
    </tfoot>
  </PlainGrid>
);

const Tool = ({ w, icon, lines, caret, off }: { w: number; icon: React.ReactNode; lines: string[]; caret?: boolean; off?: boolean }) => (
  <BigButton $w={w} $off={off}>
    {icon}
    {lines.map((t, i) => <LabelLine key={i}>{t}{caret && i === lines.length - 1 && <Caret />}</LabelLine>)}
  </BigButton>
);

/* smooth line through hand-drawn points */
const stroke = (pts: number[][]) =>
  pts.reduce((d, p, i) => {
    if (i === 0) return `M${p[0]} ${p[1]}`;
    const a = pts[i - 2] ?? pts[i - 1], b = pts[i - 1], n = pts[i + 1] ?? p;
    return `${d}C${b[0] + (p[0] - a[0]) / 6} ${b[1] + (p[1] - a[1]) / 6} ${p[0] - (n[0] - b[0]) / 6} ${p[1] - (n[1] - b[1]) / 6} ${p[0]} ${p[1]}`;
  }, "");
const inkFormula = [[400, 125], [345, 116], [300, 110], [269, 108], [220, 110], [192, 113], [180, 118], [156, 128], [127, 136], [110, 152], [101, 168], [101, 180], [107, 193], [122, 206], [139, 217], [155, 223], [180, 226], [204, 225], [245, 220], [286, 218], [367, 214], [408, 214], [478, 214], [531, 207], [592, 202], [633, 193], [658, 188], [695, 181], [717, 170], [719, 163], [715, 155], [701, 145], [682, 134], [658, 124], [609, 107], [571, 97], [559, 94], [527, 91], [510, 91], [449, 95], [400, 98], [367, 102], [327, 105], [310, 109], [301, 113]];
const inkMatrix = [[743, 345], [765, 347], [814, 360], [864, 376], [915, 387], [952, 397], [992, 407], [1024, 420], [1041, 430], [1058, 441], [1087, 464], [1129, 502], [1159, 538], [1173, 560], [1180, 578], [1181, 600], [1178, 629], [1167, 658], [1142, 689], [1117, 712], [1083, 738], [1054, 752], [1032, 756], [982, 756], [906, 755], [835, 754], [801, 751], [759, 745], [708, 732], [666, 716], [628, 697], [612, 683], [603, 672], [590, 642], [582, 607], [574, 549], [569, 498], [570, 458], [577, 436], [595, 407], [618, 379], [628, 371], [658, 356], [687, 349], [717, 347], [750, 350], [792, 358], [814, 361]];

const Chevron = () => <Svg s={9} h={12}><L d="M1.500 0.500L7 6L1.500 11.500" c="#ddd" /></Svg>;

const taskIcons: { name: string; icon: React.ReactNode; w?: number; state?: "open" | "active" }[] = [
  { name: "Start", w: 48, icon: <Svg s={16}><path d="M0 2.500L7 1.500V7.500H0ZM8 1.300L16 0V7.500H8ZM0 8.500H7V14.500L0 13.500ZM8 8.500H16V16L8 14.700Z" fill="#fff" /></Svg> },
  { name: "Search", w: 48, icon: <Svg s={18}><circle cx="11" cy="7" r="5.500" stroke="#fff" strokeWidth="1.300" /><L d="M7 11L1 17" c="#fff" w={1.5} /></Svg> },
  { name: "Task view", w: 48, icon: <Svg s={20} h={16}><rect x="4.500" y="1.500" width="11" height="13" stroke="#fff" /><L d="M3 3.500H0.500V12.500H3M17 3.500H19.500V12.500H17" c="#fff" /></Svg> },
  { name: "File Explorer", w: 54, icon: <Svg s={22} h={18}><path d="M1 0H8L10 2H21V17H1Z" fill="#f5cf6a" /><R x={1} y={4} w={20} h={13} f="#ffe394" /><path d="M4 18V10H18V18H14V14H8V18Z" fill="#34a9dd" /></Svg> },
  { name: "Remote Desktop", w: 46, icon: <Svg s={24}><path d="M1 1L17 0L21 14L6 16Z" fill="#ddd" /><path d="M3 2.500L15.500 1.500L19 12.500L7 14Z" fill="#2546c4" /><path d="M10 2L15.500 1.500L19 12.500Z" fill="#7aa0ee" /><path d="M5 19L14 17L18 20L8 23Z" fill="#aaa" /><circle cx="18" cy="19" r="4.500" fill="#e8ebe6" /><L d="M16 17L18 19L16 21M20 17L19 18" c="#2f8f3b" /></Svg> },
  { name: "Outlook", state: "open", icon: <Svg s={24}><R x={12} y={6} w={11} h={12} f="#fff" /><L d="M13 8L17 13L23 7" c="#0a72c6" w={1.500} /><path d="M1 3L14 1V23L1 20Z" fill="#0a72c6" /><ellipse cx="7.500" cy="12" rx="3" ry="3.700" stroke="#fff" strokeWidth="2" /></Svg> },
  { name: "Chrome", state: "open", icon: <Svg s={24}><circle cx="12" cy="12" r="11" fill="#f7c927" /><path d="M12 12L2.500 6.500A11 11 0 0 1 21.500 6.500H12Z" fill="#dd4b3e" /><path d="M2.500 6.500L9 16L12 23A11 11 0 0 1 2.500 6.500Z" fill="#3da453" /><circle cx="12" cy="12" r="5" fill="#4a87ee" stroke="#fff" strokeWidth="1.500" /></Svg> },
  { name: "OneNote", state: "open", icon: <Svg s={24}><R x={6} y={1} w={18} h={22} f="#c966e8" /><R x={19} y={7} w={5} h={8} f="#ad45d2" /><R x={19} y={15} w={5} h={8} f="#9b30c4" /><R x={0} y={5} w={14} h={14} f="#7c1fb0" /><L d="M4.500 15.500V8.500L9.500 15.500V8.500" c="#fff" w={1.5} /></Svg> },
  { name: "Power BI Desktop", state: "active", icon: <Svg s={24}><R x={0} y={0} w={24} h={24} f="#f2c811" /><rect x="4" y="6" width="16" height="11" rx="2" stroke="#222" strokeWidth="1.500" /><R x={7} y={14} w={2} h={4} f="#222" /><R x={10} y={12} w={2} h={6} f="#222" /><R x={13} y={10} w={2} h={9} f="#222" /><R x={16} y={9} w={2} h={10} f="#222" /></Svg> },
  { name: "Photos", icon: <Svg s={20}><circle cx="10" cy="10" r="9.500" fill="#fff" /><path d="M9 9H2A8 8 0 0 1 9 2Z" fill="#f26bb0" /><path d="M11 9V2A8 8 0 0 1 18 9Z" fill="#f5893c" /><path d="M9 11V18A8 8 0 0 1 2 11Z" fill="#3d9bf0" /><path d="M11 11H18A8 8 0 0 1 11 18Z" fill="#25c268" /></Svg> },
  { name: "Messenger", state: "open", icon: <Svg s={24}><circle cx="12" cy="11" r="10.500" fill="#2a6fc4" /><path d="M4 18L3 24L11 21Z" fill="#cfe3f7" /><path d="M2.500 12A9 9 0 0 1 13 4Q21 5 19 13Q17 20 9 18Q16 17 16 12Q15 7 10 8T6 14Z" fill="#e8f2fc" /><circle cx="11.500" cy="12" r="2.500" fill="#1c4f9c" /></Svg> },
  { name: "Webex", state: "open", icon: <Svg s={22}><circle cx="11" cy="11" r="9.500" fill="#0f5f7d" stroke="#bfe4ee" strokeWidth="1.500" /><path d="M4 14A8 8 0 0 1 12 3Q7 7 8 14Z" fill="#1fb5dd" /><path d="M8 15Q6 6 14 5Q18 8 16 13Q13 18 8 15Z" fill="#dff0cf" /><path d="M8 15Q13 15 17 9Q18 15 13 17Q10 17 8 15Z" fill="#61bf4b" /></Svg> },
  { name: "Teams", state: "open", icon: <Svg s={24}><R x={12} y={8} w={6} h={10} f="#fff" /><R x={19} y={9} w={4} h={7} f="#d9dbf2" /><circle cx="15" cy="5" r="2.300" fill="#fff" /><circle cx="20.500" cy="6" r="2" fill="#d9dbf2" /><path d="M0 3L12 0V22L0 19Z" fill="#5059b5" /><L d="M3 8H9.500M6.300 8V15" c="#fff" w={1.500} /><circle cx="19" cy="19" r="5" fill="#76b82a" stroke="#fff" /><L d="M16.500 19L18.500 21L21.500 17" c="#fff" w={1.5} /></Svg> },
];

export default function App() {
  return (
    <Shell>
      <Global />
      <TitleBar>
        <QuickTools>
          <Svg s={16}><R x={0} y={0} w={16} h={16} f="#f2c811" /><R x={3} y={9} w={2} h={4} f="#111" /><R x={6} y={7} w={2} h={6} f="#111" /><R x={9} y={8} w={2} h={5} f="#111" /><R x={12} y={4} w={2} h={9} f="#111" /></Svg>
          <QuickDivider />
          <Svg s={14}><path d="M1 1H13V13H3L1 11Z" stroke="#8251a8" strokeWidth="2" /><R x={3} y={7} w={8} h={6} f="#8251a8" /><R x={5} y={10} w={4} h={4} f="#fff" /></Svg>
          <Svg s={16} size={14}><L d="M3 5H9Q14 5 13 10Q12 14 8 14M6 1L2 5L6 9" c="#a3b1cc" w={2} /></Svg>
          <Svg s={16} size={14}><L d="M13 5H7Q2 5 3 10Q4 14 8 14M10 1L14 5L10 9" c="#a3b1cc" w={2} /></Svg>
          <Svg s={8}><path d="M1 1.500H7M1 4H7L4 7Z" fill="#222" stroke="#222" strokeWidth=".8" /></Svg>
          <QuickDivider />
          <WindowTitle>First Dashboard - Power BI Desktop</WindowTitle>
        </QuickTools>
        <WindowButtons>
          <WindowButton aria-label="Minimize"><Svg s={10}><L d="M0 5.500H10" c="#000" /></Svg></WindowButton>
          <WindowButton aria-label="Restore"><Svg s={10}><L d="M0.500 2.500H7.500V9.500H0.500ZM2.500 2V0.500H9.500V7.500H8" c="#000" /></Svg></WindowButton>
          <WindowButton aria-label="Close"><Svg s={10}><L d="M0 0L10 10M10 0L0 10" c="#000" /></Svg></WindowButton>
        </WindowButtons>
      </TitleBar>
      <MenuBar>
        <MenuTab $w={56} $kind="file">File</MenuTab>
        <MenuTab $w={76} $kind="active">Home</MenuTab>
        <MenuTab $w={55}>View</MenuTab>
        <MenuTab $w={79}>Modeling</MenuTab>
        <MenuTab $w={70}>Help</MenuTab>
        <Account>
          Alrythmond Luna
          <AccountIcons>
            <Svg s={10} h={6}><L d="M1 5L5 1L9 5" c="#999" /></Svg>
            <Svg s={14}><circle cx="7" cy="7" r="7" fill="#1277d6" /><L d="M5 5.500Q5 3.500 7 3.500T9 5.500Q9 6.500 7 8V9M7 10V11.500" c="#fff" w={1.3} /></Svg>
          </AccountIcons>
        </Account>
      </MenuBar>

      <Ribbon>
        <Group $w={156}>
          <GroupTools $pad={0}>
            <Tool w={51} icon={big.paste} lines={["Paste"]} off />
            <SmallTools $off>
              <SmallButton>{sm.cut}Cut</SmallButton>
              <SmallButton>{sm.copy}Copy</SmallButton>
              <SmallButton>{sm.painter}Format Painter</SmallButton>
            </SmallTools>
          </GroupTools>
          <GroupLabel>Clipboard</GroupLabel>
        </Group>
        <Group $w={260}>
          <GroupTools>
            <Tool w={46} icon={big.getData} lines={["Get", "Data"]} caret />
            <Tool w={48} icon={big.recent} lines={["Recent", "Sources"]} caret />
            <Tool w={49} icon={big.enter} lines={["Enter", "Data"]} />
            <ToolDivider />
            <Tool w={56} icon={big.edit} lines={["Edit", "Queries"]} caret />
            <ToolDivider />
            <Tool w={49} icon={big.refresh} lines={["Refresh"]} />
          </GroupTools>
          <GroupLabel>External data</GroupLabel>
        </Group>
        <Group $w={265}>
          <GroupTools $pad={2}>
            <Tool w={44} icon={big.newPage} lines={["New", "Page"]} caret />
            <Tool w={40} icon={big.newVisual} lines={["New", "Visual"]} />
            <Tool w={54} icon={big.ask} lines={["Ask A", "Question"]} />
            <Tool w={47} icon={big.buttons} lines={["Buttons", ""]} caret />
            <SmallTools>
              <SmallButton>{sm.text}Text box</SmallButton>
              <SmallButton>{sm.image}Image</SmallButton>
              <SmallButton>{sm.shapes}Shapes <Caret /></SmallButton>
            </SmallTools>
          </GroupTools>
          <GroupLabel>Insert</GroupLabel>
        </Group>
        <Group $w={121}>
          <GroupTools $pad={2}>
            <Tool w={71} icon={big.market} lines={["From", "Marketplace"]} />
            <Tool w={40} icon={big.file} lines={["From", "File"]} />
          </GroupTools>
          <GroupLabel>Custom visuals</GroupLabel>
        </Group>
        <Group $w={57}>
          <GroupTools $pad={0}><Tool w={54} icon={big.theme} lines={["Switch", "Theme"]} caret /></GroupTools>
          <GroupLabel>Themes</GroupLabel>
        </Group>
        <Group $w={86}>
          <GroupTools $pad={0}><Tool w={83} icon={big.relations} lines={["Manage", "Relationships"]} /></GroupTools>
          <GroupLabel>Relationships</GroupLabel>
        </Group>
        <Group $w={139}>
          <GroupTools $pad={7}>
            <SmallTools>
              <SmallButton>{sm.measure}New Measure</SmallButton>
              <SmallButton>{sm.column}New Column</SmallButton>
              <SmallButton>{sm.quick}New Quick Measure</SmallButton>
            </SmallTools>
          </GroupTools>
          <GroupLabel>Calculations</GroupLabel>
        </Group>
        <Group $w={54}>
          <GroupTools $pad={0}><Tool w={50} icon={big.publish} lines={["Publish"]} /></GroupTools>
          <GroupLabel>Share</GroupLabel>
        </Group>
      </Ribbon>

      <Workspace>
        <SideNav>
          <NavButton $state="active" aria-label="Report"><Svg s={20}><rect x="1" y="1" width="18" height="17" stroke="#fff" strokeWidth="1.500" /><R x={4} y={9} w={3} h={8} f="#fff" /><R x={8} y={12} w={3} h={5} f="#fff" /><R x={13} y={6} w={3} h={11} f="#fff" /></Svg></NavButton>
          <NavButton aria-label="Data"><Svg s={20}><R x={1} y={0} w={18} h={5} f="#7c7c7c" /><L d="M1.500 1V18.500H18.500V1M1 9.500H19M1 14H19M7.500 5V19M13 5V19" c="#7c7c7c" /></Svg></NavButton>
          <NavButton $state="soft" aria-label="Model"><Svg s={20}><L d="M1 6.500H8V13H1ZM12 1.500H19V8H12ZM8 9L12 5" c="#777" /><L d="M1 6.500H8M12 1.500H19" c="#777" w={3} /><L d="M15 10.500L16.500 13.500L19 15L16.500 16L15 19L13.500 16L11 15L13.500 13.500Z" c="#777" /></Svg></NavButton>
        </SideNav>

        <Main>
          <FormulaRow>
            <FormulaActions>
              <button aria-label="Cancel"><Svg s={14}><L d="M1 1L13 13M13 1L1 13" c="#999" w={1.300} /></Svg></button>
              <button aria-label="Commit"><Svg s={20} h={16}><L d="M1 8L7 14L19 1" c="#999" w={1.800} /></Svg></button>
            </FormulaActions>
            <FormulaBox>
              <Code>
                <LineNumber>1</LineNumber>
                {"ZeroColumn = "}
                <Tok $c="#3165bb">if</Tok><Bracket>(</Bracket><Tok $c="#3165bb">MAX</Tok>(Sales[Chain]) = <Tok $c="#a31515">"Ready Wear"</Tok>,0,<Tok $c="#3165bb">SUM</Tok>(Sales[Sales])<Bracket>)</Bracket>
              </Code>
              <MiniMap>
                <Svg s={14} h={20}><R x={0} y={1} w={6} h={17} f="#a0a0a0" /><R x={0} y={0} w={14} h={2} f="#444" /></Svg>
                <Svg s={12} h={16}><L d="M0 5L6 11L12 5" c="#999" /></Svg>
              </MiniMap>
            </FormulaBox>
          </FormulaRow>

          <Gap $h={21} />
          <Dots />
          <Report>
            <LeftColumn>
              <Visual><DataTable edge cols={stateCols} rows={stateRows} total={["Total", "57,658,858", "4,122,373.24", "NULL", "2", "WA"]} /></Visual>
              <Visual $top={111} $left={15}><DataTable edge cols={catCols} rows={catRows} total={["Total", "57,658,858", "False", "3,466,823.97"]} /></Visual>
            </LeftColumn>
            <RightColumn>
              <Visual $left={68}><DataTable cols={dateCols} rows={dateRows} total={["48,770", "", ""]} /></Visual>
              <Visual $top={104}>
                <Matrix $w={409}>
                  <colgroup>{[57, 96, 80, 88, 88].map((w, i) => <col key={i} style={{ width: w }} />)}</colgroup>
                  <thead>
                    <tr><th>Country</th><th colSpan={3}>Australia</th><th className="sum">Total</th></tr>
                    <tr><th>State</th><th>Bellings</th><th>Ready Wear</th><th className="sum">Total</th><th /></tr>
                  </thead>
                  <tbody>
                    {matrixRows.map((r) => (
                      <tr key={r[0]}>
                        <th scope="row">{r[0]}</th>
                        {r.slice(1).map((v, i) => <Cell key={i} $right className={i > 1 ? "sum" : undefined}>{v}</Cell>)}
                      </tr>
                    ))}
                  </tbody>
                </Matrix>
              </Visual>
            </RightColumn>
          </Report>
          <Dots />
          <PageTabs>
            <TabArrows>
              <Svg s={5} h={8}><path d="M5 0V8L0 4Z" fill="#c2c2c2" /></Svg>
              <Svg s={5} h={8}><path d="M0 0V8L5 4Z" fill="#c2c2c2" /></Svg>
            </TabArrows>
            {pageTabs.map(([name, w]) => <PageTab key={name} $w={w} $active={name === "Page 1"}>{name}</PageTab>)}
            <AddPage aria-label="New page"><Svg s={11}><R x={4} y={0} w={3} h={11} f="#777" /><R x={0} y={4} w={11} h={3} f="#777" /></Svg></AddPage>
          </PageTabs>
        </Main>

        <Pane>
          <PaneHead><PaneTitle>VISUALIZATIONS</PaneTitle><Chevron /></PaneHead>
          <IconGrid>{vizIcons.map(([name, art]) => <IconButton key={name} aria-label={name}><Svg>{art}</Svg></IconButton>)}</IconGrid>
          <FormatTabs>
            <FormatTab $active aria-label="Fields"><Svg s={20}><L d="M0 0.500H16" c="#fff" /><path d="M0.500 3.500H19.500V9.500H0.500ZM0.500 12.500H19.500V18.500H0.500Z" stroke="#fff" strokeDasharray="2 1" /></Svg></FormatTab>
            <FormatTab aria-label="Format"><Svg s={20}><L d="M1.500 0.500H15.500V4.500H1.500ZM16 2.500H18.500V7.500H9.500V10M7.500 10.500H11.500V19.500H7.500Z" c="#fff" /></Svg></FormatTab>
          </FormatTabs>
          <PaneBody $tight>
            <WellLabel $pad={6}>Values</WellLabel>
            <Well>Add data fields here</Well>
          </PaneBody>
          <SectionHead>FILTERS</SectionHead>
          <PaneBody>
            <WellLabel $pad={10}>Page level filters</WellLabel>
            <Well>Add data fields here</Well>
            <WellLabel $pad={10}>Report level filters</WellLabel>
            <Well>Add data fields here</Well>
          </PaneBody>
          <SectionHead>DRILLTHROUGH</SectionHead>
          <PaneBody>
            <WellLabel $pad={3}>Cross-report</WellLabel>
            <ToggleRow>Off<Toggle type="checkbox" role="switch" /></ToggleRow>
            <WellLabel $pad={3}>Keep all filters</WellLabel>
            <ToggleRow>On<Toggle type="checkbox" role="switch" defaultChecked /></ToggleRow>
            <Well>Add drillthrough fields here</Well>
          </PaneBody>
        </Pane>

        <Pane>
          <PaneHead><PaneTitle>FIELDS</PaneTitle><Chevron /></PaneHead>
          <SearchBox>
            <Svg s={16}><circle cx="10" cy="6" r="5" stroke="#aaa" /><L d="M6.500 9.500L1 15" c="#aaa" /></Svg>
            <SearchInput type="search" placeholder="Search" aria-label="Search fields" />
          </SearchBox>
          <FieldTree>
            {["Buyers", "Dates", "Managers", "MeasuresTable", "Regions", "Sales"].map((n) => (
              <TableRow key={n} $open={n === "Sales"}>
                <Svg s={8}>{n === "Sales" ? <path d="M0 7L6 1V7Z" fill="#999" /> : <path d="M2 0L6 4L2 8Z" fill="#999" />}</Svg>
                <TableGlyph />
                {n}
              </TableRow>
            ))}
            <FieldList>
              {fields.map(([n, icon]) => (
                <FieldRow key={n} $selected={n === "ZeroColumn"}>
                  {icon === "hier" ? <Svg s={8}><path d="M2 0L6 4L2 8Z" fill="#999" /></Svg> : <span />}
                  <FieldCheck type="checkbox" />
                  {fieldIcons[icon]}
                  <FieldName>{n}</FieldName>
                </FieldRow>
              ))}
            </FieldList>
          </FieldTree>
        </Pane>
      </Workspace>

      <StatusBar>PAGE 7 OF 8</StatusBar>
      <TaskBar>
        {taskIcons.map((t) => <TaskButton key={t.name} $w={t.w} $state={t.state} aria-label={t.name}>{t.icon}</TaskButton>)}
        <Clock>{"7:24 AM\n9/05/2019"}</Clock>
      </TaskBar>

      <InkLayer width="1200" height="800" aria-hidden="true">
        <path d={stroke(inkFormula)} fill="none" stroke="#0b0bff" strokeWidth="2" />
        <path d={stroke(inkMatrix)} fill="none" stroke="#0b0bff" strokeWidth="2" />
      </InkLayer>
    </Shell>
  );
}
